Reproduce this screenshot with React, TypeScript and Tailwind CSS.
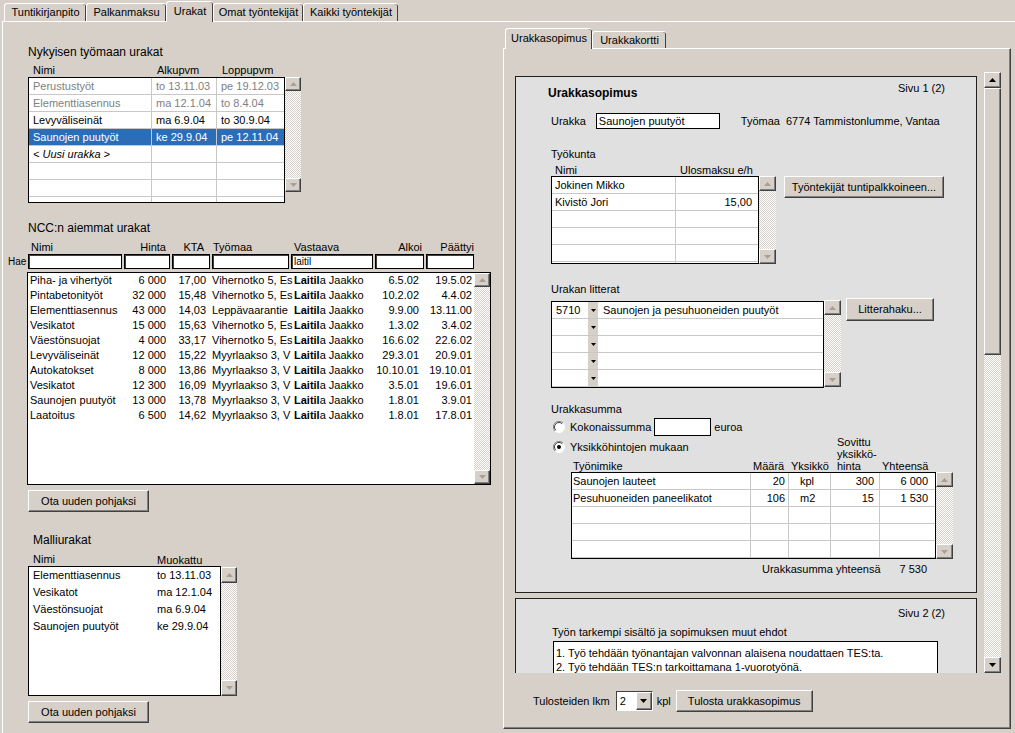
import React from "react";

// classic 3D look shared by buttons, scroll arrows and thumbs
const raised =
  "border border-t-white border-l-white border-r-[#404040] border-b-[#404040] shadow-[inset_-1px_-1px_0_#808080]";
const dither =
  "bg-[image:repeating-conic-gradient(#ffffff_0%_25%,#d6d0c9_0%_50%)] bg-[length:2px_2px]";
const grid = "border-[#c8c8c8]";

function Tri({ up = false, dim = false, small = false }: { up?: boolean; dim?: boolean; small?: boolean }) {
  const w = small ? 5 : 7;
  const h = small ? 3 : 4;
  const pts = up ? `${w / 2},0 ${w},${h} 0,${h}` : `0,0 ${w},0 ${w / 2},${h}`;
  return (
    <svg width={w} height={h} viewBox={`0 0 ${w} ${h}`} className="block">
      <polygon points={pts} fill={dim ? "#a8a098" : "#000"} />
    </svg>
  );
}

function SBtn({ up = false, dim = false, className = "" }: { up?: boolean; dim?: boolean; className?: string }) {
  return (
    <div className={`flex shrink-0 items-center justify-center bg-[#d6d0c9] ${raised} ${className}`}>
      <Tri up={up} dim={dim} />
    </div>
  );
}

function VScroll({ className = "", btn = "", dim = true }: { className?: string; btn?: string; dim?: boolean }) {
  return (
    <div className={`flex shrink-0 flex-col ${className}`}>
      <SBtn up dim={dim} className={btn} />
      <div className={`flex-1 ${dither}`} />
      <SBtn dim={dim} className={btn} />
    </div>
  );
}

function Btn({ children, className = "" }: { children: React.ReactNode; className?: string }) {
  return (
    <button type="button" className={`flex shrink-0 items-center justify-center bg-[#d6d0c9] ${raised} ${className}`}>
      {children}
    </button>
  );
}

function Radio({ on = false }: { on?: boolean }) {
  return (
    <svg width="12" height="12" viewBox="0 0 12 12" className="block shrink-0">
      <circle cx="6" cy="6" r="5.5" fill="#fff" stroke="#fff" />
      <path d="M10 2 A5.5 5.5 0 0 0 2 10" fill="none" stroke="#808080" />
      <path d="M9.2 2.8 A4.5 4.5 0 0 0 2.8 9.2" fill="none" stroke="#404040" />
      {on && <circle cx="6" cy="6" r="2" fill="#000" />}
    </svg>
  );
}

const topTabs = [
  { label: "Tuntikirjanpito", w: "w-[82px]", active: false },
  { label: "Palkanmaksu", w: "w-[80px]", active: false },
  { label: "Urakat", w: "w-[47px]", active: true },
  { label: "Omat työntekijät", w: "w-[90px]", active: false },
  { label: "Kaikki työntekijät", w: "w-[95px]", active: false },
];

const current = [
  { n: "Perustustyöt", a: "to 13.11.03", l: "pe 19.12.03", kind: "old" },
  { n: "Elementtiasennus", a: "ma 12.1.04", l: "to 8.4.04", kind: "old" },
  { n: "Levyväliseinät", a: "ma 6.9.04", l: "to 30.9.04", kind: "" },
  { n: "Saunojen puutyöt", a: "ke 29.9.04", l: "pe 12.11.04", kind: "sel" },
  { n: "< Uusi urakka >", a: "", l: "", kind: "new" },
  { n: "", a: "", l: "", kind: "" },
  { n: "", a: "", l: "", kind: "" },
  { n: "", a: "", l: "", kind: "" },
];

// työmaa column shows only what fits in the grid cell
const ncc = [
  ["Piha- ja vihertyöt", "6 000", "17,00", "Vihernotko 5, Es", "6.5.02", "19.5.02"],
  ["Pintabetonityöt", "32 000", "15,48", "Vihernotko 5, Es", "10.2.02", "4.4.02"],
  ["Elementtiasennus", "43 000", "14,03", "Leppävaarantie", "9.9.00", "13.11.00"],
  ["Vesikatot", "15 000", "15,63", "Vihernotko 5, Es", "1.3.02", "3.4.02"],
  ["Väestönsuojat", "4 000", "33,17", "Vihernotko 5, Es", "16.6.02", "22.6.02"],
  ["Levyväliseinät", "12 000", "15,22", "Myyrlaakso 3, V", "29.3.01", "20.9.01"],
  ["Autokatokset", "8 000", "13,86", "Myyrlaakso 3, V", "10.10.01", "19.10.01"],
  ["Vesikatot", "12 300", "16,09", "Myyrlaakso 3, V", "3.5.01", "19.6.01"],
  ["Saunojen puutyöt", "13 000", "13,78", "Myyrlaakso 3, V", "1.8.01", "3.9.01"],
  ["Laatoitus", "6 500", "14,62", "Myyrlaakso 3, V", "1.8.01", "17.8.01"],
];

const malli = [
  ["Elementtiasennus", "to 13.11.03"],
  ["Vesikatot", "ma 12.1.04"],
  ["Väestönsuojat", "ma 6.9.04"],
  ["Saunojen puutyöt", "ke 29.9.04"],
];

const tyokunta = [
  ["Jokinen Mikko", ""],
  ["Kivistö Jori", "15,00"],
  ["", ""],
  ["", ""],
  ["", ""],
  ["", ""],
];

const tyot = [
  ["Saunojen lauteet", "20", "kpl", "300", "6 000"],
  ["Pesuhuoneiden paneelikatot", "106", "m2", "15", "1 530"],
  ["", "", "", "", ""],
  ["", "", "", "", ""],
  ["", "", "", "", ""],
  ["", "", "", "", ""],
];

function TopTabs() {
  return (
    <div className="flex h-[21px] shrink-0 items-end pl-[4px]">
      {topTabs.map((t) =>
        t.active ? (
          <div
            key={t.label}
            className={`relative z-10 -mb-px flex h-[21px] ${t.w} items-center justify-center rounded-t-[3px] border-l border-t border-white bg-[#d6d0c9] pb-[2px] shadow-[inset_-1px_0_0_#404040]`}
          >
            {t.label}
          </div>
        ) : (
          <div
            key={t.label}
            className={`flex h-[18px] ${t.w} items-center justify-center rounded-t-[3px] border-l border-t border-white shadow-[inset_-1px_0_0_#404040]`}
          >
            {t.label}
          </div>
        )
      )}
    </div>
  );
}

function LeftColumn() {
  return (
    <div className="flex w-[500px] shrink-0 flex-col pl-[25px]">
      {/* nykyisen työmaan urakat */}
      <div className="mt-[23px] h-[14px] text-[12px] leading-[14px]">Nykyisen työmaan urakat</div>
      <div className="mt-[5px] flex h-[13px] leading-[13px]">
        <span className="w-[129px] pl-[5px]">Nimi</span>
        <span className="w-[65px]">Alkupvm</span>
        <span>Loppupvm</span>
      </div>
      <div className="flex items-start">
        <div className="h-[126px] w-[257px] overflow-hidden border border-black bg-white">
          {current.map((r, i) => {
            const tone =
              r.kind === "sel"
                ? "bg-[#2c6db8] text-white"
                : r.kind === "old"
                ? "text-[#808080]"
                : r.kind === "new"
                ? "italic"
                : "";
            return (
              <div key={i} className={`flex h-[17px] border-b ${grid} leading-[16px] whitespace-nowrap ${tone}`}>
                <div className={`w-[123px] border-r ${grid} pl-[4px]`}>{r.n}</div>
                <div className={`w-[65px] border-r ${grid} pl-[4px]`}>{r.a}</div>
                <div className="flex-1 pl-[4px]">{r.l}</div>
              </div>
            );
          })}
        </div>
        <VScroll className="h-[115px] w-[16px]" btn="h-[14px]" />
      </div>

      {/* NCC:n aiemmat urakat */}
      <div className="mt-[18px] h-[14px] text-[12px] leading-[14px]">NCC:n aiemmat urakat</div>
      <div className="mt-[6px] flex h-[12px] leading-[12px] whitespace-nowrap">
        <span className="w-[95px] pl-[3px]">Nimi</span>
        <span className="w-[48px] pr-[5px] text-right">Hinta</span>
        <span className="w-[40px] pr-[7px] text-right">KTA</span>
        <span className="w-[82px] pl-[2px]">Työmaa</span>
        <span className="w-[82px] pl-[1px]">Vastaava</span>
        <span className="w-[50px] pr-[3px] text-right">Alkoi</span>
        <span className="w-[49px] text-right">Päättyi</span>
      </div>
      <div className="-ml-[20px] mt-px flex h-[15px] items-center">
        <span className="w-[20px] text-[10px]">Hae</span>
        <div className="flex gap-[2px]">
          <div className="h-[15px] w-[94px] border border-black bg-white shadow-[inset_1px_1px_0_#404040]" />
          <div className="h-[15px] w-[46px] border border-black bg-white shadow-[inset_1px_1px_0_#404040]" />
          <div className="h-[15px] w-[38px] border border-black bg-white shadow-[inset_1px_1px_0_#404040]" />
          <div className="h-[15px] w-[77px] border border-black bg-white shadow-[inset_1px_1px_0_#404040]" />
          <div className="h-[15px] w-[82px] border border-black bg-white pl-[2px] text-[10px] leading-[13px] shadow-[inset_1px_1px_0_#404040]">
            laitil
          </div>
          <div className="h-[15px] w-[49px] border border-black bg-white shadow-[inset_1px_1px_0_#404040]" />
          <div className="h-[15px] w-[48px] border border-black bg-white shadow-[inset_1px_1px_0_#404040]" />
        </div>
      </div>
      <div className="-ml-px mt-[3px] flex h-[213px] w-[464px] border border-black bg-white">
        <div className="w-[446px] overflow-hidden">
          {ncc.map((r, i) => (
            <div key={i} className="flex h-[15px] leading-[15px] whitespace-nowrap">
              <div className="w-[95px] overflow-hidden pl-[2px]">{r[0]}</div>
              <div className="w-[48px] pr-[5px] text-right">{r[1]}</div>
              <div className="w-[40px] pr-[5px] text-right">{r[2]}</div>
              <div className="w-[82px] overflow-hidden pl-[1px]">{r[3]}</div>
              <div className="w-[82px] overflow-hidden pl-[1px]">
                <b>Laitil</b>a Jaakko
              </div>
              <div className="w-[50px] pr-[6px] text-right">{r[4]}</div>
              <div className="w-[49px] pr-[2px] text-right">{r[5]}</div>
            </div>
          ))}
        </div>
        <VScroll className="h-full w-[16px]" btn="h-[14px]" />
      </div>
      <Btn className="mt-[5px] h-[22px] w-[121px]">Ota uuden pohjaksi</Btn>

      {/* malliurakat */}
      <div className="ml-[5px] mt-[21px] h-[14px] text-[12px] leading-[14px]">Malliurakat</div>
      <div className="mt-[6px] flex h-[13px] leading-[13px]">
        <span className="w-[129px] pl-[5px]">Nimi</span>
        <span className="pt-px">Muokattu</span>
      </div>
      <div className="flex items-start">
        <div className="h-[130px] w-[193px] border border-black bg-white">
          {malli.map((r) => (
            <div key={r[0]} className="flex h-[17px] leading-[17px] whitespace-nowrap">
              <span className="w-[128px] pl-[4px]">{r[0]}</span>
              <span>{r[1]}</span>
            </div>
          ))}
        </div>
        <VScroll className="mt-px h-[129px] w-[16px]" btn="h-[16px]" />
      </div>
      <Btn className="mt-[5px] h-[22px] w-[121px]">Ota uuden pohjaksi</Btn>
    </div>
  );
}

function PageOne() {
  return (
    <div className="flex h-[517px] flex-col border border-[#202020] bg-[#e0e0e0] whitespace-nowrap">
      <div className="mt-[4px] flex h-[17px] items-start justify-between pl-[32px] pr-[31px]">
        <span className="pt-[5px] text-[12px] font-bold leading-[14px]">Urakkasopimus</span>
        <span className="leading-[14px]">Sivu 1 (2)</span>
      </div>
      <div className="mt-[15px] flex h-[16px] items-center pl-[35px]">
        <span>Urakka</span>
        <div className="ml-[10px] h-[16px] w-[124px] border border-black bg-white pl-[2px] leading-[14px]">
          Saunojen puutyöt
        </div>
        <span className="ml-[21px]">Työmaa</span>
        <span className="ml-[6px]">6774 Tammistonlumme, Vantaa</span>
      </div>

      {/* työkunta */}
      <div className="mt-[19px] h-[13px] pl-[35px] leading-[13px]">Työkunta</div>
      <div className="mt-[3px] flex h-[12px] pl-[39px] leading-[12px]">
        <span className="w-[125px]">Nimi</span>
        <span>Ulosmaksu e/h</span>
      </div>
      <div className="flex h-[88px] items-start pl-[35px]">
        <div className="h-[88px] w-[208px] overflow-hidden border border-black bg-white">
          {tyokunta.map((r, i) => (
            <div key={i} className={`flex h-[17px] border-b ${grid} leading-[16px]`}>
              <div className={`w-[124px] border-r ${grid} pl-[3px]`}>{r[0]}</div>
              <div className="flex-1 pr-[6px] text-right">{r[1]}</div>
            </div>
          ))}
        </div>
        <VScroll className="h-[88px] w-[17px]" btn="h-[15px]" />
        <Btn className="ml-[8px] h-[22px] w-[160px]">Työntekijät tuntipalkkoineen...</Btn>
      </div>

      {/* urakan litterat */}
      <div className="mt-[19px] h-[13px] pl-[35px] leading-[13px]">Urakan litterat</div>
      <div className="mt-[2px] flex h-[90px] items-start pl-[35px]">
        <div className="mt-[3px] h-[87px] w-[273px] overflow-hidden border border-black bg-white">
          {[0, 1, 2, 3, 4, 5].map((i) => (
            <div key={i} className={`flex h-[17px] border-b ${grid} leading-[16px]`}>
              <div className="w-[36px] pl-[4px]">{i === 0 ? "5710" : ""}</div>
              <div className="flex w-[10px] items-center justify-center bg-[#d6d0c9]">
                <Tri small />
              </div>
              <div className="pl-[5px]">{i === 0 ? "Saunojen ja pesuhuoneiden puutyöt" : ""}</div>
            </div>
          ))}
        </div>
        <VScroll className="mt-[2px] h-[87px] w-[17px]" btn="h-[15px]" />
        <Btn className="ml-[5px] h-[23px] w-[88px]">Litterahaku...</Btn>
      </div>

      {/* urakkasumma */}
      <div className="mt-[15px] h-[13px] pl-[35px] leading-[13px]">Urakkasumma</div>
      <div className="mt-[2px] flex h-[18px] items-center pl-[37px]">
        <Radio />
        <span className="ml-[5px]">Kokonaissumma</span>
        <div className="ml-[3px] h-[18px] w-[57px] border border-black bg-white" />
        <span className="ml-[3px]">euroa</span>
      </div>
      <div className="flex h-[36px] items-end pl-[35px]">
        <div className="flex h-[36px] w-[200px] flex-col">
          <div className="mt-[2px] flex h-[18px] items-center pl-[2px]">
            <Radio on />
            <span className="ml-[5px]">Yksikköhintojen mukaan</span>
          </div>
          <div className="mt-[4px] h-[12px] pl-[22px] leading-[12px]">Työnimike</div>
        </div>
        <div className="w-[38px] pl-[2px] leading-[12px]">Määrä</div>
        <div className="w-[42px] pl-[2px] leading-[12px]">Yksikkö</div>
        <div className="w-[49px] pl-[6px] leading-[12px]">
          Sovittu
          <br />
          yksikkö-
          <br />
          hinta
        </div>
        <div className="pl-[2px] leading-[12px]">Yhteensä</div>
      </div>
      <div className="flex h-[87px] items-start pl-[55px]">
        <div className="h-[87px] w-[365px] overflow-hidden border border-black bg-white">
          {tyot.map((r, i) => (
            <div key={i} className={`flex h-[17px] border-b ${grid} leading-[16px]`}>
              <div className={`w-[179px] border-r ${grid} pl-[1px]`}>{r[0]}</div>
              <div className={`w-[38px] border-r ${grid} pr-[3px] text-right`}>{r[1]}</div>
              <div className={`w-[42px] border-r ${grid} pl-[11px]`}>{r[2]}</div>
              <div className={`w-[49px] border-r ${grid} pr-[5px] text-right`}>{r[3]}</div>
              <div className="w-[55px] pr-[7px] text-right">{r[4]}</div>
            </div>
          ))}
        </div>
        <VScroll className="h-[87px] w-[17px]" btn="h-[15px]" />
      </div>
      <div className="mt-[4px] flex h-[13px] pl-[246px] leading-[13px]">
        <span className="w-[119px]">Urakkasumma yhteensä</span>
        <span className="w-[46px] text-right">7 530</span>
      </div>
    </div>
  );
}

function PageTwo() {
  return (
    <div className="mt-[5px] h-[100px] border border-[#202020] bg-[#e0e0e0] whitespace-nowrap">
      <div className="mt-[7px] h-[14px] pr-[31px] text-right leading-[14px]">Sivu 2 (2)</div>
      <div className="mt-[6px] h-[13px] pl-[36px] leading-[13px]">Työn tarkempi sisältö ja sopimuksen muut ehdot</div>
      <div className="ml-[37px] mt-[2px] h-[60px] w-[385px] border border-black bg-white pl-[2px] pt-[4px] leading-[14px]">
        <div>1. Työ tehdään työnantajan valvonnan alaisena noudattaen TES:ta.</div>
        <div>2. Työ tehdään TES:n tarkoittamana 1-vuorotyönä.</div>
      </div>
    </div>
  );
}

function RightColumn() {
  return (
    <div className="flex flex-1 flex-col">
      <div className="ml-[2px] mt-[6px] flex h-[20px] shrink-0 items-end">
        <div className="relative z-10 -mb-px flex h-[21px] w-[87px] items-center justify-center rounded-t-[3px] border-l border-t border-white bg-[#d6d0c9] pb-[2px] shadow-[inset_-1px_0_0_#404040]">
          Urakkasopimus
        </div>
        <div className="flex h-[17px] w-[74px] items-center justify-center rounded-t-[3px] border-l border-t border-white shadow-[inset_-1px_0_0_#404040]">
          Urakkakortti
        </div>
      </div>
      <div className={`flex h-[681px] w-[508px] flex-col pl-[11px] pt-[23px] ${raised}`}>
        <div className="flex h-[601px]">
          <div className="h-full w-[462px] overflow-hidden pt-[4px]">
            <PageOne />
            <PageTwo />
          </div>
          <div className="ml-[7px] flex h-[601px] w-[17px] flex-col">
            <SBtn up className="h-[16px]" />
            <div className={`h-[267px] bg-[#d6d0c9] ${raised}`} />
            <div className={`flex-1 ${dither}`} />
            <SBtn className="h-[16px]" />
          </div>
        </div>
        <div className="mt-[17px] flex h-[22px] items-center pl-[18px]">
          <span>Tulosteiden lkm</span>
          <div className="ml-[6px] flex h-[20px] w-[37px] border border-b-white border-l-[#404040] border-r-white border-t-[#404040] bg-white">
            <span className="flex-1 pl-[3px] leading-[18px]">2</span>
            <SBtn className="h-[18px] w-[16px]" />
          </div>
          <span className="ml-[4px]">kpl</span>
          <Btn className="ml-[5px] h-[22px] w-[137px]">Tulosta urakkasopimus</Btn>
        </div>
      </div>
    </div>
  );
}

export default function App() {
  return (
    <div className="flex h-[733px] w-[1015px] flex-col overflow-hidden bg-[#d6d0c9] font-['Liberation_Sans',Arial,sans-serif] text-[11px] text-black select-none">
      <TopTabs />
      <div className="ml-[2px] flex flex-1 border-l border-t border-white">
        <LeftColumn />
        <RightColumn />
      </div>
    </div>
  );
}
